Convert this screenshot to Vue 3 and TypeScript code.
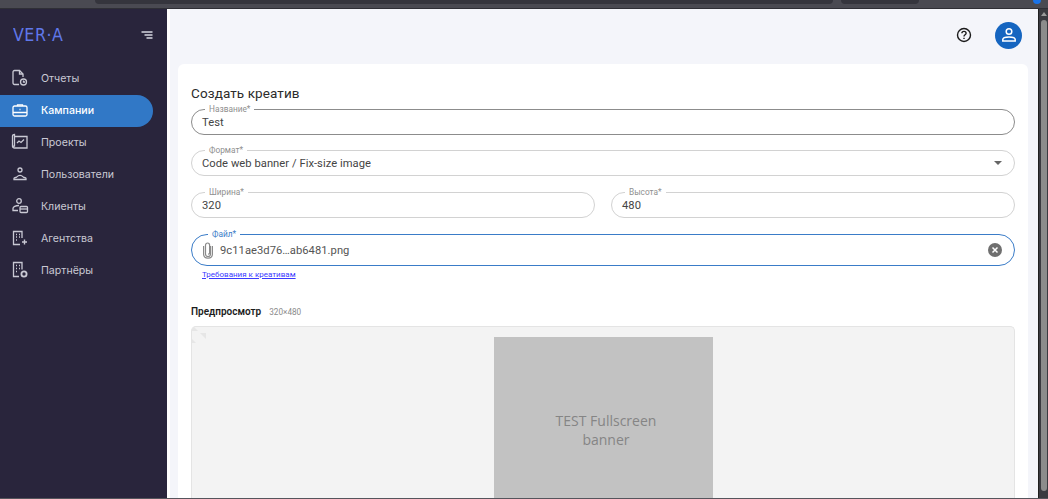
<template>
  <div class="screen">
    <div class="browser-bar">
      <span class="address"></span>
      <span class="tab-pill"></span>
      <span class="ext-dot"></span>
    </div>
    <div class="body">
      <aside class="sidebar">
        <div class="brand">
          <span class="logo">VER·A</span>
          <svg class="collapse" viewBox="0 0 12 8" width="12" height="8" fill="none" stroke="#d5d6e0" stroke-width="1.3">
            <path d="M0.5 1H11.5M3.5 4H11.5M5.5 7H11.5" />
          </svg>
        </div>
        <nav class="nav">
          <a v-for="item in navItems" :key="item.label" class="nav-item" :class="{ active: item.active }">
            <svg viewBox="0 0 18 18" width="18" height="18" fill="none" stroke="currentColor" stroke-width="1.3" v-html="item.icon"></svg>
            <span>{{ item.label }}</span>
          </a>
        </nav>
      </aside>
      <main class="main">
        <header class="topbar">
          <svg class="help" viewBox="0 0 16 16" width="16" height="16" fill="none" stroke="#1b1b1b" stroke-width="1.4">
            <circle cx="8" cy="8" r="6.5" />
            <path d="M5.9 6.3C5.9 5 6.9 4.4 8 4.4S10.1 5.1 10.1 6.2C10.1 7.7 8 7.7 8 9.4" />
            <path d="M8 10.8V12" />
          </svg>
          <div class="avatar">
            <svg viewBox="0 0 18 18" width="18" height="18" fill="none" stroke="#fff" stroke-width="1.5">
              <circle cx="9" cy="5.5" r="2.8" />
              <path d="M2.8 15V13.6C2.8 11.9 6 11 9 11S15.2 11.9 15.2 13.6V15Z" />
            </svg>
          </div>
        </header>
        <section class="card">
          <h1 class="title">Создать креатив</h1>
          <div class="fields">
            <div class="field strong">
              <label>Название*</label>
              <span class="value">Test</span>
            </div>
            <div class="field">
              <label>Формат*</label>
              <span class="value">Code web banner / Fix-size image</span>
              <span class="caret"></span>
            </div>
            <div class="row">
              <div class="field">
                <label>Ширина*</label>
                <span class="value">320</span>
              </div>
              <div class="field">
                <label>Высота*</label>
                <span class="value">480</span>
              </div>
            </div>
            <div class="field focused">
              <label>Файл*</label>
              <svg class="clip" viewBox="0 0 12 18" width="12" height="18" fill="none" stroke="#8a8a8a" stroke-width="1.2">
                <path d="M8.5 5V13C8.5 14.5 7.4 15.5 6 15.5S3.5 14.5 3.5 13V4.2C3.5 3 4.4 2 5.6 2S7.6 3 7.6 4.2V12C7.6 12.7 7 13.2 6 13.2" />
                <path d="M1.6 5V13C1.6 15.5 3.5 17.2 6 17.2S10.4 15.5 10.4 13V5" />
              </svg>
              <span class="value file-name">9c11ae3d76…ab6481.png</span>
              <span class="clear">
                <svg viewBox="0 0 14 14" width="14" height="14">
                  <circle cx="7" cy="7" r="7" fill="#6f6f6f" />
                  <path d="M4.5 4.5L9.5 9.5M9.5 4.5L4.5 9.5" stroke="#fff" stroke-width="1.5" />
                </svg>
              </span>
            </div>
          </div>
          <a class="req-link">Требования к креативам</a>
          <div class="preview-head">
            <strong>Предпросмотр</strong>
            <span>320×480</span>
          </div>
          <div class="preview">
            <svg class="broken" viewBox="0 0 18 18" width="18" height="18" fill="#e6e6e6">
              <path d="M0 2L2 0L6 4H0ZM8 6H14V12ZM0 12L4 16H0Z" />
            </svg>
            <div class="banner">TEST Fullscreen<br />banner</div>
          </div>
        </section>
      </main>
      <div class="scrollbar">
        <span class="arrow"></span>
        <span class="thumb"></span>
      </div>
    </div>
    <div class="bottom-edge"></div>
  </div>
</template>

<script setup lang="ts">
interface NavItem {
  label: string;
  icon: string;
  active?: boolean;
}

const navItems: NavItem[] = [
  {
    label: "Отчеты",
    icon: '<path d="M8 15.5H3.5C2.7 15.5 2 14.8 2 14V3C2 2.2 2.7 1.5 3.5 1.5H8.5L12 5V8"/><path d="M8.5 1.5V5H12"/><circle cx="12.5" cy="13" r="3"/><path d="M12.5 11.5V13H14"/>',
  },
  {
    label: "Кампании",
    active: true,
    icon: '<rect x="2" y="5" width="14" height="10" rx="1.5"/><path d="M2 11.5H16M6.5 5V3.8H11.5V5M8.5 8.5H9.5"/>',
  },
  {
    label: "Проекты",
    icon: '<path d="M3.5 3.5H16V15H3.5C2.4 15 1.5 14.3 1.5 13.2V3C1.5 2 2.4 1.5 3.5 1.5V13C2.4 13 1.5 13.2 1.5 14"/><path d="M6 10L8 8L10 9.5L13 6.5"/>',
  },
  {
    label: "Пользователи",
    icon: '<circle cx="9" cy="5" r="2"/><path d="M3 14.5V13.6C3 12.8 3.8 12.4 4.8 12.5C5.8 12.6 6.2 10.4 9 10.4S12.2 12.6 13.2 12.5C14.2 12.4 15 12.8 15 13.6V14.5Z"/>',
  },
  {
    label: "Клиенты",
    icon: '<circle cx="8" cy="4" r="2.3"/><path d="M8 8.5C4.5 8.5 2 10 2 11.5V13.5H7"/><rect x="9" y="9.5" width="7.5" height="6" rx="1"/><path d="M9 12H16.5"/>',
  },
  {
    label: "Агентства",
    icon: '<path d="M9 15.5H2.5V2.5H11V9"/><path d="M5 5.5H6M8 5.5H9M5 8H6M8 8H9M5 11H6M11 13H16M13.5 10.5V15.5" stroke-width="1.4"/>',
  },
  {
    label: "Партнёры",
    icon: '<path d="M8 15.5H2.5V1.5H11V8.5"/><path d="M5 4.5H6M8 4.5H9M5 7.5H6M8 7.5H9M5 10.5H6" stroke-width="1.4"/><circle cx="13" cy="13" r="2.6" stroke-width="1.8"/>',
  },
];
</script>

<style>
html,
body {
  margin: 0;
  background: #f4f5fa;
}
</style>

<style scoped>
.screen {
  position: relative;
  width: 1048px;
  height: 499px;
  overflow: hidden;
  display: flex;
  flex-direction: column;
  font-family: Roboto, "Liberation Sans", sans-serif;
  color: #2a2a2a;
}
.browser-bar {
  position: relative;
  flex: 0 0 8px;
  background: #4a4a52;
  border-bottom: 1px solid #2f2f36;
  box-sizing: content-box;
}
.address {
  position: absolute;
  left: 95px;
  top: 0;
  width: 738px;
  height: 4px;
  background: #35353d;
  border-radius: 0 0 6px 6px;
}
.tab-pill {
  position: absolute;
  left: 841px;
  top: 0;
  width: 78px;
  height: 4px;
  background: #35353d;
  border-radius: 0 0 6px 6px;
}
.ext-dot {
  position: absolute;
  left: 1033px;
  top: -4px;
  width: 8px;
  height: 8px;
  border-radius: 50%;
  background: #1a73e8;
}
.body {
  flex: 1;
  display: flex;
  min-height: 0;
}
.sidebar {
  flex: 0 0 167px;
  background: #29253c;
  color: #c9c9d4;
  display: flex;
  flex-direction: column;
}
.brand {
  display: flex;
  align-items: center;
  justify-content: space-between;
  height: 51px;
  padding: 0 14px 0 13px;
}
.logo {
  font-family: "DejaVu Sans", sans-serif;
  font-size: 18px;
  letter-spacing: 0.6px;
  color: #6078ea;
  transform: scaleX(0.88);
  transform-origin: left center;
}
.nav {
  display: flex;
  flex-direction: column;
  margin-top: 2.6px;
}
.nav-item {
  display: flex;
  align-items: center;
  gap: 12px;
  height: 32px;
  width: 153px;
  padding-left: 11px;
  box-sizing: border-box;
  font-family: Inter, Roboto, sans-serif;
  font-size: 10.6px;
  border-radius: 0 16px 16px 0;
}
.nav-item svg {
  margin-bottom: 1px;
}
.nav-item.active {
  background: #3178c6;
  color: #fff;
  font-weight: 500;
}
.main {
  flex: 1;
  min-width: 0;
  background: #f4f5fa;
  border-left: 3px solid #fff;
  padding-right: 10px;
  display: flex;
  flex-direction: column;
}
.topbar {
  flex: 0 0 55px;
  box-sizing: border-box;
  display: flex;
  align-items: center;
  justify-content: flex-end;
  gap: 23px;
  padding: 0 6px 3px 0;
}
.avatar {
  width: 27px;
  height: 27px;
  border-radius: 50%;
  background: #1565c0;
  display: flex;
  align-items: center;
  justify-content: center;
}
.card {
  flex: 1;
  margin-left: 8px;
  background: #fff;
  border-radius: 6px 6px 0 0;
  padding: 21px 13px 0;
  display: flex;
  flex-direction: column;
  min-height: 0;
}
.title {
  margin: 0;
  font-size: 13.5px;
  line-height: 17px;
  letter-spacing: 0.1px;
  font-weight: 400;
  color: #2c2c2c;
}
.fields {
  display: flex;
  flex-direction: column;
  gap: 15px;
  margin-top: 7px;
}
.row {
  display: flex;
  gap: 16px;
  margin-top: 1px;
}
.row .field {
  flex: 1;
}
.field {
  position: relative;
  display: flex;
  align-items: center;
  height: 26px;
  padding: 0 10px;
  border: 1px solid #d2d2d2;
  border-radius: 13px;
  box-sizing: border-box;
}
.field label {
  position: absolute;
  top: -6px;
  left: 13px;
  padding: 0 4px;
  background: #fff;
  font-size: 8.3px;
  line-height: 10px;
  color: #8f8f8f;
}
.field.strong {
  border-color: #8c8c8c;
}
.field.focused {
  height: 32px;
  border-radius: 16px;
  margin-top: 1px;
  border: 1.5px solid #3a7cc8;
}
.field.focused label {
  color: #3a7cc8;
  left: 16px;
}
.value {
  font-size: 11.2px;
  letter-spacing: 0.04px;
  color: #444;
}
.clip {
  flex: none;
  margin-right: 6px;
}
.file-name {
  color: #555;
}
.clear {
  margin-left: auto;
  display: flex;
  margin-right: 2px;
}
.caret {
  margin-left: auto;
  margin-right: 2px;
  border: 4px solid transparent;
  border-top-color: #666;
  border-bottom-width: 0;
}
.req-link {
  margin-top: 3px;
  margin-left: 11px;
  font-size: 8px;
  line-height: 12px;
  color: #3a3aff;
  text-decoration: underline;
}
.preview-head {
  display: flex;
  align-items: baseline;
  gap: 8px;
  margin-top: 25px;
}
.preview-head strong {
  font-size: 10px;
  font-weight: 600;
  color: #1c1c1c;
}
.preview-head span {
  font-size: 8.2px;
  color: #8b8b8b;
}
.preview {
  position: relative;
  flex: 1;
  margin-top: 9px;
  background: #f3f3f3;
  border: 1px solid #e4e4e4;
  border-bottom: 0;
  border-radius: 5px 5px 0 0;
  display: flex;
  justify-content: center;
  padding-top: 10px;
}
.broken {
  position: absolute;
  left: 0;
  top: 0;
}
.banner {
  width: 219px;
  height: 200px;
  background: #c2c2c2;
  color: #858585;
  font-family: "Open Sans", sans-serif;
  font-size: 14px;
  line-height: 19px;
  text-align: center;
  padding: 74px 0 0 6px;
  box-sizing: border-box;
}
.scrollbar {
  flex: 0 0 10px;
  background: #3a3a40;
  border-left: 1px solid #1f1f1f;
  box-sizing: border-box;
  display: flex;
  flex-direction: column;
  align-items: center;
  gap: 4px;
  padding-top: 3px;
}
.arrow {
  border: 3px solid transparent;
  border-bottom: 4px solid #9a9a9a;
  border-top-width: 0;
}
.thumb {
  width: 6px;
  flex: 1;
  margin-bottom: 8px;
  background: #8c8c8c;
  border-radius: 3px;
}
.bottom-edge {
  position: absolute;
  left: 0;
  right: 0;
  bottom: 0;
  height: 1px;
  background: #55555c;
}
</style>
